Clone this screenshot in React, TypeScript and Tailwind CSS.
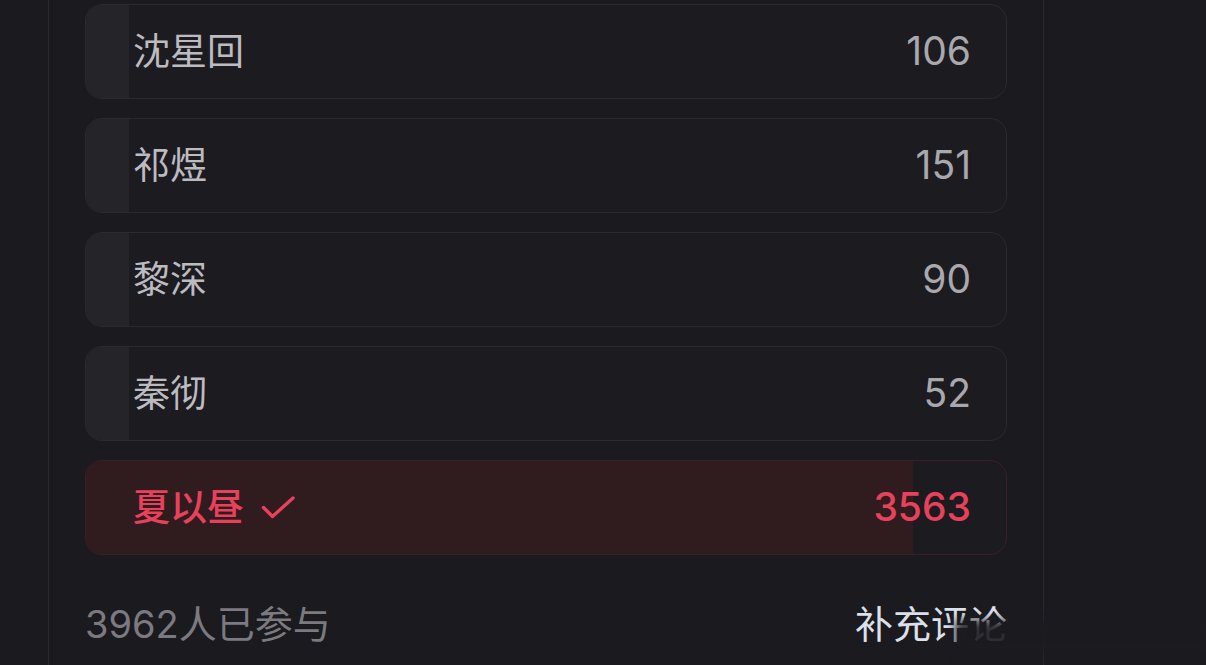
type Option = {
  name: string;
  votes: number;
  picked?: boolean;
};

const options: Option[] = [
  { name: "沈星回", votes: 106 },
  { name: "祁煜", votes: 151 },
  { name: "黎深", votes: 90 },
  { name: "秦彻", votes: 52 },
  { name: "夏以昼", votes: 3563, picked: true },
];

const total = 3962;

function Check() {
  return (
    <svg width="36" height="26" viewBox="0 0 36 26" fill="none" className="ml-[17px]">
      <path
        d="M2.5 12.5 L11.5 21.5 L32 3"
        stroke="currentColor"
        strokeWidth="3.4"
        strokeLinecap="round"
        strokeLinejoin="round"
      />
    </svg>
  );
}

function OptionRow({ option }: { option: Option }) {
  const pct = (option.votes / total) * 100;
  return (
    <div
      className={
        option.picked
          ? "relative h-[95px] overflow-hidden rounded-[17px] border border-[#3b2027] bg-[#1c1b20]"
          : "relative h-[95px] overflow-hidden rounded-[17px] border border-[#2b2a30] bg-[#1c1b20]"
      }
    >
      <div
        className={
          option.picked
            ? "absolute inset-y-0 left-0 bg-[#301b1f]"
            : "absolute inset-y-0 left-0 bg-[#252429]"
        }
        style={{ width: `max(43px, ${pct}%)` }}
      />
      <div className="relative flex h-full items-center justify-between pl-[47px] pr-[35px]">
        <div
          className={
            option.picked
              ? "flex items-center text-[37px] font-medium text-[#e8415b]"
              : "flex items-center text-[37px] text-[#bcbbc0]"
          }
        >
          <span>{option.name}</span>
          {option.picked && <Check />}
        </div>
        <span
          className={
            option.picked
              ? "text-[39px] font-medium text-[#e8415b]"
              : "text-[39px] text-[#a9a8ad]"
          }
        >
          {option.votes}
        </span>
      </div>
    </div>
  );
}

export default function App() {
  return (
    <div
      className="relative h-[665px] w-[1206px] overflow-hidden bg-[#1b1a1f]"
      style={{ fontFamily: 'Inter, "Noto Sans CJK SC", sans-serif' }}
    >
      <div className="ml-[48px] h-full w-[996px] border-x border-[#2a2930] px-[36px] pt-[4px]">
        <div className="flex flex-col gap-[19px]">
          {options.map((o) => (
            <OptionRow key={o.name} option={o} />
          ))}
        </div>
        <div className="mt-[44px] flex items-center justify-between leading-[50px]">
          <span className="text-[38px] text-[#7b7a80]">{total}人已参与</span>
          <span className="text-[38px] text-[#dce0ea]">补充评论</span>
        </div>
      </div>

      {/* faded watermark strip in the lower right corner */}
      <div className="absolute left-[955px] top-[620px] h-[34px] w-[260px] bg-[#1c1b20] opacity-90 blur-[5px]" />
    </div>
  );
}
